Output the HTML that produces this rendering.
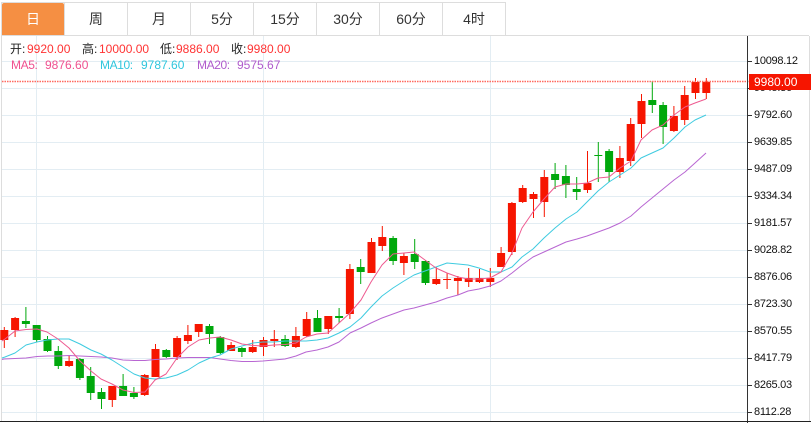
<!DOCTYPE html>
<html><head><meta charset="utf-8"><style>
html,body{margin:0;padding:0;background:#fff}
#w{position:relative;width:811px;height:423px;overflow:hidden;background:#fff;font-family:"Liberation Sans","Noto Sans CJK SC",sans-serif}
.t{position:absolute;top:3px;height:32px;width:62px;line-height:32px;text-align:center;font-size:14px;color:#333;border-right:1px solid #ddd}
.s{position:absolute;font-size:12px;line-height:16px;white-space:nowrap}
.a{position:absolute;left:754px;font-size:11px;line-height:14px;color:#111;letter-spacing:-.27px;white-space:nowrap}
</style></head><body><div id="w">
<svg width="811" height="423" style="position:absolute;left:0;top:0">
<path d="M1 2.5H506M1 35.5H809" stroke="#ddd" fill="none"/>
<path d="M1.5 2V421M809.5 36V421" stroke="#ddd" fill="none"/>
<path d="M2 61.5H747M2 88.5H747M2 115.5H747M2 142.5H747M2 169.5H747M2 196.5H747M2 223.5H747M2 250.5H747M2 277.5H747M2 304.5H747M2 331.5H747M2 358.5H747M2 385.5H747M2 412.5H747M36.5 36V421M263.5 36V421M490.5 36V421" stroke="#e3edf3" fill="none"/>
<path d="M4.3 327V348M15.1 317V337M69.1 356V367M112.3 386V407M144.7 374V396M155.5 344V377M177.1 336V360M187.9 325V344M198.7 324V337M231.1 342V351M252.7 340V353M263.5 337V356M274.3 330V347M295.9 327V348M306.7 312V337M328.3 316V334M349.9 264V319M371.5 238V273M382.3 226V251M403.9 253V275M436.3 267V285M447.1 273V289M457.9 276V295M468.7 268V287M479.5 269V283M490.3 268V287M501.1 247V267M511.9 202V255M522.7 185V203M533.5 192V218M544.3 170V217M587.5 151V193M619.9 146V178M630.7 118V166M641.5 94V138M673.9 106V132M684.7 86V125M695.5 78V99M706.3 78V99" stroke="#f61500" fill="none"/>
<path d="M4.3 330V340M15.1 318V330M69.1 361V366M112.3 386V400M144.7 375V395M155.5 349V377M177.1 338V357M187.9 335V341M198.7 324V332M231.1 345V351M252.7 347V352M263.5 340V347M274.3 339V341M295.9 336V347M306.7 319V336M328.3 316V329M349.9 269V314M371.5 242V273M382.3 237V246M403.9 256V263M436.3 279V284M447.1 279V280M457.9 278V281M468.7 278V282M479.5 278V282M490.3 278V282M501.1 253V267M511.9 203V252M522.7 188V202M533.5 194V199M544.3 177V202M587.5 183V190M619.9 158V172M630.7 124V161M641.5 101V124M673.9 116V131M684.7 95V120M695.5 82V93M706.3 82V93" stroke="#f61500" stroke-width="8" fill="none"/>
<path d="M25.9 307V328M36.7 325V342M47.5 336V352M58.3 346V369M79.9 358V380M90.7 367V400M101.5 388V409M123.1 374V396M133.9 387V399M166.3 349V358M209.5 324V344M220.3 336V354M241.9 347V357M285.1 335V347M317.5 310V332M339.1 308V323M360.7 259V284M393.1 236V265M414.7 239V269M425.5 260V285M555.1 163V189M565.9 165V198M576.7 177V200M598.3 142V182M609.1 149V182M652.3 81V113M663.1 102V144" stroke="#00a80c" fill="none"/>
<path d="M25.9 321V324M36.7 325V340M47.5 339V351M58.3 351V366M79.9 359V378M90.7 376V393M101.5 392V399M123.1 386V396M133.9 393V397M166.3 350V357M209.5 326V334M220.3 337V353M241.9 348V352M285.1 339V346M317.5 318V332M339.1 316V318M360.7 267V272M393.1 238V261M414.7 254V262M425.5 261V283M555.1 174V180M565.9 176V185M576.7 189V192M598.3 155V156M609.1 151V172M652.3 100V105M663.1 105V127" stroke="#00a80c" stroke-width="8" fill="none"/>
<polyline fill="none" stroke="#b866d2" stroke-linejoin="round" points="2,359.5 4,359 15,358.5 26,358 37,356.5 48,356 58,356 69,355.5 80,356 91,356.5 101,357 112,358 123,360 134,360.5 145,360.5 155,359.5 166,359 177,358 188,357.5 199,357.5 210,357.5 220,359 231,360.5 242,361.5 253,361.5 263,361 274,360 285,359 296,356 306,352 317,350 328,347 339,342 350,333 361,328 371,323 382,318 393,314 404,310 414,308 425,305 436,302 447,298 458,295 468,291 479,289 490,286 501,281 512,273 522,265 533,257 544,252 555,247 566,242 577,239 587,236 598,232 609,228 620,223 631,216 641,207 652,198 663,189 674,180 685,172 695,163 706,153"/>
<polyline fill="none" stroke="#3fcbe0" stroke-linejoin="round" points="2,358 5,357 15,353 26,345 37,342 47,340 58,339 69,339 80,344 91,350 101,354 112,360 123,367 134,374 145,378 155,379 166,378 177,375 188,370 199,363 210,358 220,355 231,349 242,346 253,343 263,342 274,342 285,341 296,341 306,341 317,340 328,338 339,333 350,327 361,318 371,307 382,296 393,288 404,281 414,275 425,271 436,267 447,263 458,264 468,265 479,268 490,272 501,272 512,267 522,257 533,249 544,238 555,228 566,219 577,212 587,202 598,191 609,182 620,175 631,168 641,158 652,153 663,148 674,138 685,127 695,120 706,115"/>
<polyline fill="none" stroke="#ee5a90" stroke-linejoin="round" points="2,341 5,339 15,331 26,329.5 37,329 47,332 58,339 69,348 80,361 91,371 101,379 112,384 123,390 134,392.5 145,392 155,380 166,374 177,358 188,347 199,340 210,338 220,337 231,340 242,344 253,345.5 263,346 274,345 285,344.5 296,343 306,337 317,334 328,333 339,323 350,313 361,300 371,282 382,265 393,254 404,253 414,252 425,260 436,268 447,273 458,277 468,279 479,279 490,278 501,272 512,253 522,228 533,212 544,199 555,187 566,184 577,184 587,183 598,178 609,177 620,168 631,161 641,140 652,130 663,125 674,115 685,107 695,103 706,99"/>
<path d="M2 81.5H749" stroke="#ff6a60" stroke-width="1.5" stroke-dasharray="1.5 1" fill="none"/>
<path d="M747.5 36V423" stroke="#333" fill="none"/>
<path d="M748 61.5H752M748 88.5H752M748 115.5H752M748 142.5H752M748 169.5H752M748 196.5H752M748 223.5H752M748 250.5H752M748 277.5H752M748 304.5H752M748 331.5H752M748 358.5H752M748 385.5H752M748 412.5H752" stroke="#333" fill="none"/>
<path d="M0 421.5H811" stroke="#222" fill="none"/>
</svg>
<div style="position:absolute;left:2px;top:3px;width:62px;height:32px;background:#f58f43;border-radius:2px 2px 0 0"></div>
<div class="t" style="left:2px;color:#fff;border-right:1px solid #ddd">日</div>
<div class="t" style="left:65px">周</div>
<div class="t" style="left:128px">月</div>
<div class="t" style="left:191px">5分</div>
<div class="t" style="left:254px">15分</div>
<div class="t" style="left:317px">30分</div>
<div class="t" style="left:380px">60分</div>
<div class="t" style="left:443px">4时</div>
<div class="s" style="left:10px;top:41px;color:#222">开:</div><div class="s" style="left:27px;top:41px;color:#f33">9920.00</div>
<div class="s" style="left:82px;top:41px;color:#222">高:</div><div class="s" style="left:99px;top:41px;color:#f33">10000.00</div>
<div class="s" style="left:160px;top:41px;color:#222">低:</div><div class="s" style="left:176px;top:41px;color:#f33">9886.00</div>
<div class="s" style="left:231px;top:41px;color:#222">收:</div><div class="s" style="left:247px;top:41px;color:#f33">9980.00</div>
<div class="s" style="left:11px;top:57px;color:#f0508f;letter-spacing:-.4px">MA5:</div><div class="s" style="left:45px;top:57px;color:#f0508f">9876.60</div>
<div class="s" style="left:100px;top:57px;color:#2fc6dd;letter-spacing:-.4px">MA10:</div><div class="s" style="left:141px;top:57px;color:#2fc6dd">9787.60</div>
<div class="s" style="left:197px;top:57px;color:#b05ccc;letter-spacing:-.4px">MA20:</div><div class="s" style="left:237px;top:57px;color:#b05ccc">9575.67</div>
<div class="a" style="top:54px">10098.12</div>
<div class="a" style="top:81px">9945.36</div>
<div class="a" style="top:108px">9792.60</div>
<div class="a" style="top:135px">9639.85</div>
<div class="a" style="top:162px">9487.09</div>
<div class="a" style="top:189px">9334.34</div>
<div class="a" style="top:216px">9181.57</div>
<div class="a" style="top:243px">9028.82</div>
<div class="a" style="top:270px">8876.06</div>
<div class="a" style="top:297px">8723.30</div>
<div class="a" style="top:324px">8570.55</div>
<div class="a" style="top:351px">8417.79</div>
<div class="a" style="top:378px">8265.03</div>
<div class="a" style="top:405px">8112.28</div>
<div style="position:absolute;left:749px;top:74px;width:62px;height:16px;background:#f61500"></div>
<div class="a" style="top:75px;color:#fff;font-size:12px;letter-spacing:0">9980.00</div>
</div></body></html>
